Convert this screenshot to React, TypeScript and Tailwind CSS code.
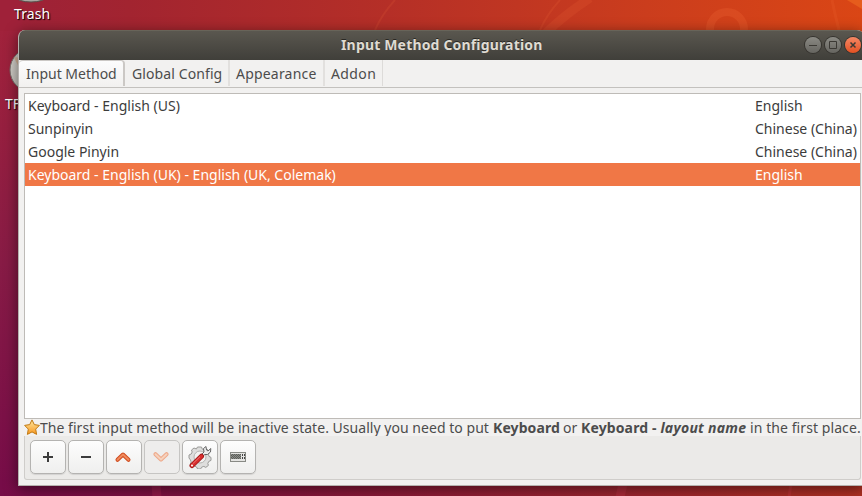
import type { ReactNode } from "react";

function Backdrop() {
  return (
    <svg className="absolute inset-0" width="862" height="496" viewBox="0 0 862 496">
      <defs>
        <linearGradient id="top" x1="0" x2="1" y1="0" y2="0">
          <stop offset="0" stopColor="#9d2139" />
          <stop offset="0.15" stopColor="#a22430" />
          <stop offset="0.45" stopColor="#b52f27" />
          <stop offset="0.75" stopColor="#cb3d1d" />
          <stop offset="1" stopColor="#da4615" />
        </linearGradient>
        <linearGradient id="side" x1="0" x2="0" y1="0" y2="1">
          <stop offset="0" stopColor="#a1223b" />
          <stop offset="0.5" stopColor="#871b45" />
          <stop offset="1" stopColor="#760c48" />
        </linearGradient>
        <linearGradient id="foot" x1="0" x2="1" y1="0" y2="0">
          <stop offset="0" stopColor="#760c48" />
          <stop offset="0.3" stopColor="#82143c" />
          <stop offset="0.7" stopColor="#9a2430" />
          <stop offset="1" stopColor="#b03022" />
        </linearGradient>
        <linearGradient id="disc" x1="0" x2="1" y1="0" y2="1">
          <stop offset="0" stopColor="#d9d6d0" />
          <stop offset="1" stopColor="#b3afa9" />
        </linearGradient>
      </defs>
      <rect width="862" height="60" fill="url(#top)" />
      <rect y="30" width="22" height="466" fill="url(#side)" />
      <rect width="22" height="31" fill="#9f2139" />
      <rect y="480" width="862" height="16" fill="url(#foot)" />
      <g fill="none" stroke="#ff7a45" strokeOpacity="0.12">
        <path d="M395 0Q382 14 375 30" strokeWidth="2" />
        <path d="M560 0Q547 14 540 30" strokeWidth="2" />
        <path d="M590 -2Q563 16 546 33" strokeWidth="9" />
        <circle cx="727" cy="29" r="17" strokeWidth="8" strokeOpacity="0.18" />
        <path d="M832 0Q835 15 839 30" strokeWidth="3" />
      </g>
      <g fill="none" stroke="#ff5070" strokeOpacity="0.14">
        <path d="M156 484L157 497M623 484L620 497" strokeWidth="9" />
        <path d="M791 484L789 497" strokeWidth="3" />
      </g>
      <path d="M847 0H862V9Z" fill="#e65c1c" />
      <ellipse cx="31" cy="-3" rx="15" ry="5" fill="#aaa7a2" stroke="#55504c" />
      <circle cx="32" cy="70" r="22" fill="url(#disc)" stroke="#77706b" />
      <path d="M14 58Q17 55 20 60L20 69Z" fill="#d3a57e" opacity="0.6" />
    </svg>
  );
}

function ToolButton({ children, disabled = false }: { children: ReactNode; disabled?: boolean }) {
  return (
    <button
      className={
        disabled
          ? "flex h-[34px] w-9 items-center justify-center rounded-[5px] border border-[#c6c5c3] bg-[#eeedec]"
          : "flex h-[34px] w-9 items-center justify-center rounded-[5px] border border-[#b4b3b1] bg-gradient-to-b from-[#fdfdfd] to-[#efefee] shadow-[0_1px_1px_rgba(0,0,0,0.1)]"
      }
    >
      {children}
    </button>
  );
}

function Chevron({ down = false }: { down?: boolean }) {
  return (
    <svg className={down ? "-translate-x-px rotate-180 opacity-65" : "-translate-x-px"} width="18" height="18" viewBox="0 0 18 18" fill="none" strokeLinecap="round" strokeLinejoin="round">
      <path d="M3.500 11.800L9 6.500L14.500 11.800" stroke={down ? "#ee8454" : "#cf4a1e"} strokeWidth="4" />
      <path d="M3.500 11.800L9 6.500L14.500 11.800" stroke={down ? "#fbc4a4" : "#f08a5c"} strokeWidth="2" />
    </svg>
  );
}

function Star() {
  return (
    <svg className="shrink-0" width="16" height="17" viewBox="0 0 16 17">
      <defs>
        <linearGradient id="gold" x1="0" x2="0" y1="0" y2="1">
          <stop offset="0" stopColor="#ffe9a0" />
          <stop offset="1" stopColor="#f8961e" />
        </linearGradient>
      </defs>
      <path d="M8 .9L10.3 5.600L15.400 6.400L11.700 10.100L12.600 15.400L8 12.900L3.400 15.400L4.300 10.100L.6 6.400L5.700 5.600Z" fill="url(#gold)" stroke="#c17a14" strokeLinejoin="round" />
    </svg>
  );
}

function SettingsIcon() {
  return (
    <svg width="24" height="24" viewBox="0 0 24 24">
      <path d="M9.5 2h4l.8 2.2 2.2 1L19 4l2.500 3-1.200 2.200.7 2.200 2 1v3l-2.200 1-1 2 .6 2-2.600 2-2-1-2.200.8-1 1.800h-3l-1-2-2.200-1-2.200.7-2-2.500 1-2.200-.8-2.100L1 13v-3l2.200-1 1-2L3.500 5 6 3l2.400 1Z" fill="#dededd" stroke="#9a9a98" />
      <circle cx="12" cy="12" r="6" fill="#f2f2f1" stroke="#b4b4b2" />
      <path d="M12 11L16 7L15.500 3.500L18 1.500L18.500 5L20 6L22.800 3.500L22.500 7L19.500 9.500L16.500 9.500L14 13Z" fill="#eee" stroke="#666" />
      <path d="M4 20.500L13.500 11.200" stroke="#9f1616" strokeWidth="5" strokeLinecap="round" />
      <path d="M4 20.500L13.500 11.200" stroke="#d92e2e" strokeWidth="3.400" strokeLinecap="round" />
      <path d="M5 18.500L12 11.700" stroke="#ee7777" />
      <circle cx="4" cy="20.400" r="1" fill="#fff" />
    </svg>
  );
}

function KeyboardIcon() {
  return (
    <svg width="16" height="10" viewBox="0 0 16 10" shapeRendering="crispEdges">
      <rect x=".5" y=".5" width="15" height="9" fill="#e4e4e2" stroke="#888a85" />
      <path d="M1 2h10v5H1Z" fill="#5d5f5b" />
      <path d="M1 2.500h10M2 3.500h9M1 4.500h10M2 5.500h9M1 6.500h10" stroke="#8b8d88" strokeDasharray="1 1" />
      <path d="M12.500 2v5M14.500 2v5" stroke="#444" strokeDasharray="2 1" />
    </svg>
  );
}

function WindowControl({ kind }: { kind: "min" | "max" | "close" }) {
  return (
    <div
      className={
        kind === "close"
          ? "size-4 rounded-full bg-gradient-to-b from-[#f58763] to-[#e2501f] shadow-[0_0_0_1px_#35332e]"
          : "size-4 rounded-full bg-gradient-to-b from-[#8b8a84] to-[#666560] shadow-[0_0_0_1px_#35332e]"
      }
    >
      <svg width="16" height="16" viewBox="0 0 16 16" fill="none" stroke="#3b3934">
        {kind === "min" && <path d="M4 8.500h8" />}
        {kind === "max" && <path d="M4.500 4.500h7v7h-7Z" />}
        {kind === "close" && <path d="M5.500 5.500l5 5M10.500 5.500l-5 5" strokeWidth="1.500" />}
      </svg>
    </div>
  );
}

function Row({ name, language, active = false }: { name: string; language: string; active?: boolean }) {
  return (
    <div className={active ? "flex h-[23px] items-center bg-[#f07746] pl-[3px] text-white" : "flex h-[23px] items-center pl-[3px]"}>
      <span className="w-[727px]">{name}</span>
      <span>{language}</span>
    </div>
  );
}

export default function App() {
  return (
    <div className="relative h-[496px] w-[862px] overflow-hidden bg-[#760c48] font-['Noto_Sans',sans-serif] text-[14px] leading-[18px] whitespace-nowrap text-[#3c3c3c]">
      <Backdrop />
      <span className="absolute top-[5px] left-[14px] tracking-[0.1px] text-white [text-shadow:1px_1px_1px_#000]">Trash</span>
      <span className="absolute top-[95px] left-[5px] text-white [text-shadow:1px_1px_1px_#000]">TF</span>
      <main className="absolute top-[30px] left-[18px] flex h-[456px] w-[846px] flex-col overflow-hidden rounded-t-[7px] border-b border-l border-[#b5b2ae] bg-[#f2f1f0] shadow-[0_3px_14px_rgba(0,0,0,0.5)]">
        <header className="-ml-px flex h-[30px] shrink-0 items-center border-t border-[#686459] bg-gradient-to-b from-[#5a574f] to-[#403f3a] pb-px">
          <h1 className="ml-[323px] w-[464px] text-[14px] font-bold tracking-[0.17px] text-[#dfdbd2] [text-shadow:0_-1px_0_#292824]">Input Method Configuration</h1>
          <div className="flex gap-1">
            <WindowControl kind="min" />
            <WindowControl kind="max" />
            <WindowControl kind="close" />
          </div>
        </header>
        <nav className="flex h-[28px] shrink-0 border-b border-[#c3c1be] text-[#4c4c4c]">
          <div className="h-[26px] w-[106px] rounded-t-[4px] border-t border-r-2 border-[#cbc8c5] bg-gradient-to-b from-[#fcfcfc] to-[#f2f1f0] pt-1 pl-[7px]">Input Method</div>
          <div className="h-[26px] w-[105px] border-r-2 border-[#e2e0de] pt-[5px] pl-[7px] tracking-[0.1px]">Global Config</div>
          <div className="h-[26px] w-[95px] border-r-2 border-[#e2e0de] pt-[5px] pl-[6px] tracking-[0.2px]">Appearance</div>
          <div className="h-[26px] w-[58px] border-r border-[#dddbd9] pt-[5px] pl-[6px] tracking-[0.4px]">Addon</div>
        </nav>
        <section className="mt-[5px] ml-[5px] h-[326px] w-[837px] shrink-0 border border-[#bebbb7] bg-white">
          <Row name="Keyboard - English (US)" language="English" />
          <Row name="Sunpinyin" language="Chinese (China)" />
          <Row name="Google Pinyin" language="Chinese (China)" />
          <Row name="Keyboard - English (UK) - English (UK, Colemak)" language="English" active />
        </section>
        <div className="ml-[5px] flex h-[17px] shrink-0 items-center text-[#4c4c4c]">
          <Star />
          <span className="w-[453px] tracking-[0.035px]">The first input method will be inactive state. Usually you need to put</span>
          <b className="w-[70px] tracking-[0.1px]">Keyboard</b>
          <span className="w-[18px]">or</span>
          <b className="w-[169px] tracking-[0.13px]">
            Keyboard - <i className="tracking-[0.27px]">layout name</i>
          </b>
          <span className="tracking-[0.08px]">in the first place.</span>
        </div>
        <footer className="ml-[5px] flex h-[44px] w-[837px] shrink-0 gap-[2px] rounded-b-[3px] border border-t-0 border-[#cfcdca] bg-[#ebeae8] pt-[4px] pl-[5px]">
          <ToolButton><svg width="12" height="12" fill="none" stroke="#3c3c3c" strokeWidth="2"><path d="M1 6h10M6 1v10" /></svg></ToolButton>
          <ToolButton><svg width="12" height="12" fill="none" stroke="#3c3c3c" strokeWidth="2"><path d="M1 6h10" /></svg></ToolButton>
          <ToolButton><Chevron /></ToolButton>
          <ToolButton disabled><Chevron down /></ToolButton>
          <ToolButton><SettingsIcon /></ToolButton>
          <ToolButton><KeyboardIcon /></ToolButton>
        </footer>
      </main>
    </div>
  );
}
